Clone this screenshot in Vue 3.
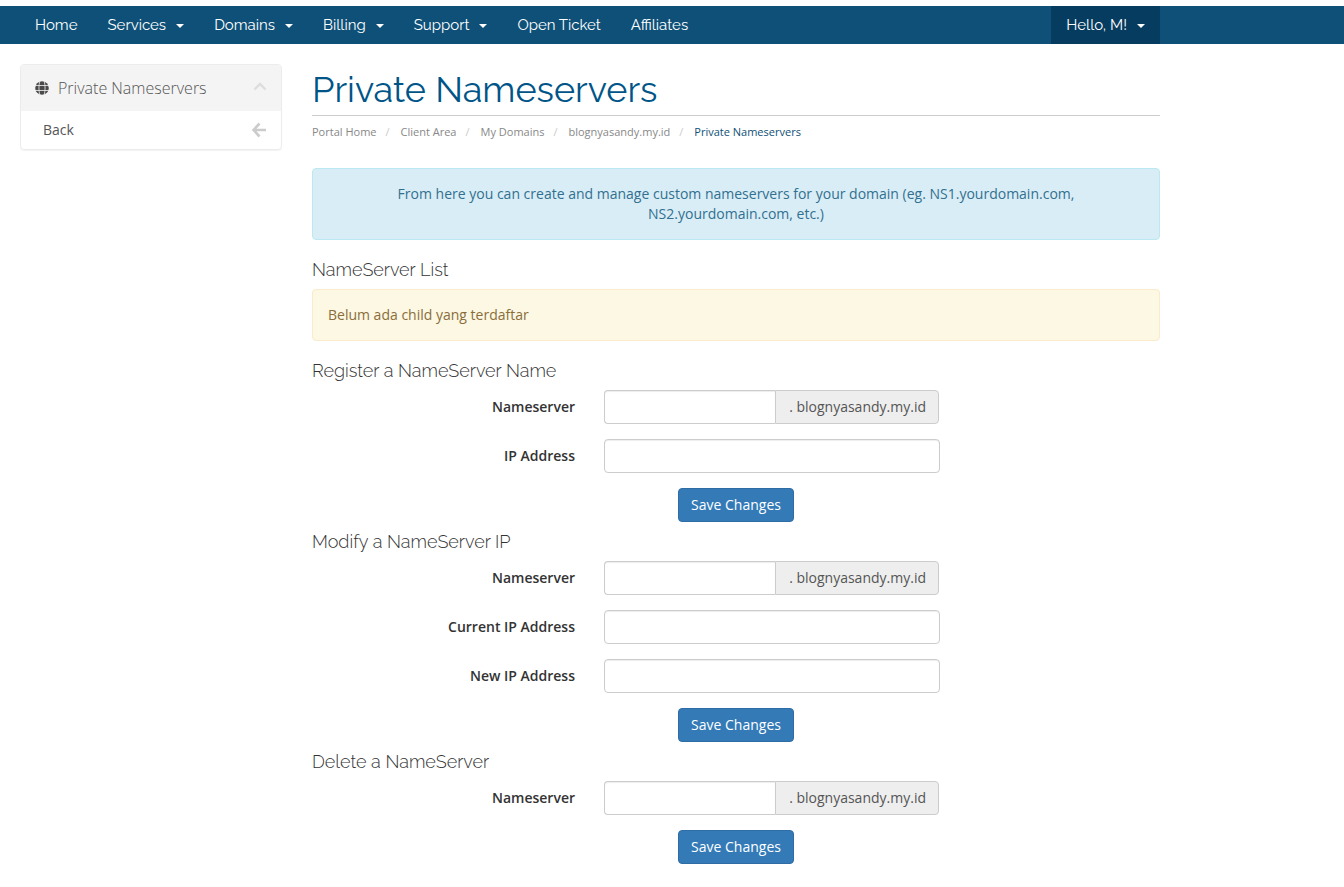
<script setup>
const nav = [
  { label: 'Home' }, { label: 'Services', menu: true }, { label: 'Domains', menu: true },
  { label: 'Billing', menu: true }, { label: 'Support', menu: true },
  { label: 'Open Ticket' }, { label: 'Affiliates' },
]
const crumbs = ['Portal Home', 'Client Area', 'My Domains', 'blognyasandy.my.id']
const forms = [
  { id: 'register', title: 'Register a NameServer Name', fields: ['IP Address'] },
  { id: 'modify', title: 'Modify a NameServer IP', fields: ['Current IP Address', 'New IP Address'] },
  { id: 'delete', title: 'Delete a NameServer', fields: [] },
]
</script>

<template>
  <div class="page">
    <header class="topbar">
      <nav class="container nav">
        <a v-for="n in nav" :key="n.label" href="#" class="nav-link">{{ n.label }}<span v-if="n.menu" class="caret"></span></a>
        <a href="#" class="nav-link account">Hello, M!<span class="caret"></span></a>
      </nav>
    </header>
    <div class="container layout">
      <aside class="panel">
        <h3 class="panel-head">
          <svg class="globe" viewBox="0 0 14 14"><circle cx="7" cy="7" r="6.8" fill="#4a4a4a" /><path d="M0 4.5H14M0 9.5H14M4.9 0C3.6 4 3.6 10 4.9 14M9.1 0C10.4 4 10.4 10 9.1 14" fill="none" stroke="#f4f4f4" stroke-width=".8" /></svg>
          <span>Private Nameservers</span>
          <svg class="chevron" viewBox="0 0 14 14"><path d="M1.5 8.5L7 3L12.5 8.5" fill="none" stroke="#ddd" stroke-width="2.4" /></svg>
        </h3>
        <a href="#" class="panel-item"><span>Back</span>
          <svg class="arrow" viewBox="0 0 16 16"><path d="M8.5 1.5L2.5 8L8.5 14.5M2.5 8H15" fill="none" stroke="#ccc" stroke-width="2.6" /></svg>
        </a>
      </aside>
      <main class="main">
        <h1>Private Nameservers</h1>
        <ol class="crumbs">
          <li v-for="c in crumbs" :key="c"><a href="#">{{ c }}</a></li>
          <li class="current">Private Nameservers</li>
        </ol>
        <div class="alert info">From here you can create and manage custom nameservers for your domain (eg. NS1.yourdomain.com, NS2.yourdomain.com, etc.)</div>
        <h4>NameServer List</h4>
        <div class="alert warning">Belum ada child yang terdaftar</div>
        <form v-for="f in forms" :key="f.id" @submit.prevent>
          <h4>{{ f.title }}</h4>
          <div class="row">
            <label :for="f.id + '-ns'">Nameserver</label>
            <div class="group"><input :id="f.id + '-ns'" type="text"><span class="addon">. blognyasandy.my.id</span></div>
          </div>
          <div v-for="(x, i) in f.fields" :key="x" class="row">
            <label :for="f.id + i">{{ x }}</label>
            <input :id="f.id + i" type="text" class="field">
          </div>
          <button type="submit">Save Changes</button>
        </form>
      </main>
    </div>
  </div>
</template>

<style>
body { margin: 0; background: #fff; }
</style>
<style scoped>
.page { padding-top: 6px; font: 14px/20px "Open Sans", sans-serif; color: #333; }
.page * { box-sizing: border-box; }
a { color: inherit; text-decoration: none; }
.topbar { background: #0e5077; }
.container { max-width: 1160px; padding-left: 20px; }
.nav { display: flex; font: 15px/20px Raleway, "Open Sans", sans-serif; color: #fff; }
.nav-link { padding: 9px 15px; white-space: nowrap; }
.caret { display: inline-block; margin-left: 10px; vertical-align: middle; border: 4px solid transparent; border-top-color: currentColor; border-bottom: 0; }
.account { margin-left: auto; background: #053c5f; }
.layout { display: grid; grid-template-columns: 262px minmax(0, 1fr); column-gap: 30px; align-items: start; padding-top: 20px; }
.panel { border: 1px solid #ececec; border-radius: 4px; overflow: hidden; box-shadow: 0 1px 1px rgba(0, 0, 0, .05); color: #555; }
.panel-head { display: flex; align-items: center; gap: 9px; margin: 0; height: 46px; padding: 0 14px; background: #f4f4f4; font: 300 16px/20px "Open Sans", sans-serif; }
.globe { width: 14px; height: 14px; }
.chevron { width: 14px; height: 14px; margin-left: auto; }
.panel-item { display: flex; justify-content: space-between; align-items: center; padding: 9px 14px 9px 22px; }
.arrow { width: 16px; height: 16px; }
h1 { margin: 0; padding: 5px 0 6px; font: 400 36px/40px Raleway, "Open Sans", sans-serif; color: #058; border-bottom: 1px solid #ccc; }
.crumbs { display: flex; margin: 8px 0 28px; padding: 0; list-style: none; font-size: 11px; line-height: 16px; color: #888; }
.crumbs li + li::before { content: "/"; padding: 0 11px 0 9px; color: #ccc; }
.crumbs .current { color: #0e5077; }
.alert { padding: 15px; border: 1px solid; border-radius: 4px; margin-bottom: 20px; }
.info { padding-left: 80px; padding-right: 80px; text-align: center; color: #31708f; background: #d9edf7; border-color: #bce8f1; }
.warning { color: #8a6d3b; background: #fcf8e3; border-color: #faebcc; }
h4 { margin: 10px 0; font: 300 18px/19px Raleway, "Open Sans", sans-serif; }
.row { display: grid; grid-template-columns: 263px 336px; column-gap: 29px; margin-bottom: 15px; }
label { padding-top: 7px; text-align: right; font-weight: 600; }
input { height: 34px; padding: 6px 12px; border: 1px solid #ccc; border-radius: 4px; font: inherit; min-width: 0; width: 100%; box-shadow: inset 0 1px 1px rgba(0, 0, 0, .075); }
.group { display: flex; padding-right: 1px; }
.group input { border-radius: 4px 0 0 4px; border-right: 0; }
.addon { flex: 0 0 164px; padding: 6px 12px; border: 1px solid #ccc; border-radius: 0 4px 4px 0; background: #eee; color: #555; text-align: right; white-space: nowrap; }
button { display: block; margin: 0 auto; height: 34px; padding: 6px 12px; border: 1px solid #2e6da4; border-radius: 4px; background: #337ab7; color: #fff; font: inherit; }
</style>
